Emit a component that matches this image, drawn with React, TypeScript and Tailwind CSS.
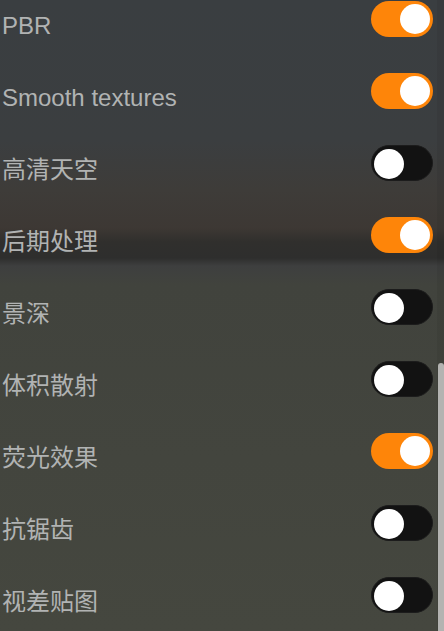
import { useState } from "react";

type TOption = {
  id: number;
  label: string;
  on: boolean;
};

const options: TOption[] = [
  { id: 1, label: "PBR", on: true },
  { id: 2, label: "Smooth textures", on: true },
  { id: 3, label: "高清天空", on: false },
  { id: 4, label: "后期处理", on: true },
  { id: 5, label: "景深", on: false },
  { id: 6, label: "体积散射", on: false },
  { id: 7, label: "荧光效果", on: true },
  { id: 8, label: "抗锯齿", on: false },
  { id: 9, label: "视差贴图", on: false },
];

const Toggle = ({ on, onClick }: { on: boolean; onClick: () => void }) => (
  <button
    onClick={onClick}
    className={`relative mt-px w-[62px] h-9 rounded-full shrink-0 ${
      on ? "bg-[#fe8509]" : "bg-[#121212] border border-[#1c1c1c]"
    }`}
  >
    <span
      className={`absolute top-[3px] w-[30px] h-[30px] rounded-full bg-white ${
        on ? "left-[29px]" : "left-[2px] top-[2px]"
      }`}
    />
  </button>
);

const App = () => {
  const [state, setState] = useState(options.map((o) => o.on));

  return (
    <div
      className="relative w-[444px] h-[631px] overflow-hidden bg-[linear-gradient(180deg,#3a3e41_0px,#3b3e40_140px,#3e3c39_190px,#3d3834_228px,#302f2d_242px,#2e2e2d_258px,#3e3f3f_266px,#41433d_285px,#45473f_631px)]"
      style={{ fontFamily: '"Liberation Sans", "Noto Sans CJK SC", sans-serif' }}
    >
      <div className="flex flex-col pl-[2px] pr-[11px]">
        {options.map((opt, i) => (
          <div key={opt.id} className="flex items-start justify-between h-[72px]">
            <span className="pt-2 text-[24px] leading-9 text-[#b1b3b3]">{opt.label}</span>
            <Toggle
              on={state[i]}
              onClick={() => setState((s) => s.map((v, j) => (j === i ? !v : v)))}
            />
          </div>
        ))}
      </div>

      {/* scrollbar */}
      <div className="absolute top-0 right-0 w-[7px] h-full bg-black/5" />
      <div className="absolute top-[363px] right-0 w-[6px] h-[290px] rounded-full bg-[#b3b3b1]" />
    </div>
  );
};

export default App;
